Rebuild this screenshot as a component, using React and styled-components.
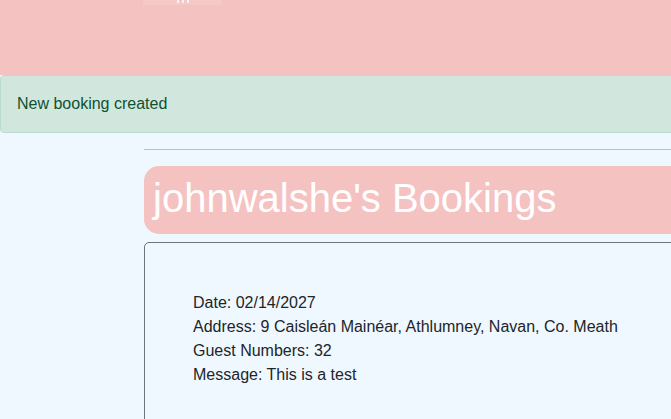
import React from "react";
import styled, { createGlobalStyle } from "styled-components";

const Global = createGlobalStyle`
  html, body { margin: 0; padding: 0; background: #f0f8ff; overflow: hidden; }
  body { font-family: "Liberation Sans", Arial, sans-serif; font-size: 16px; line-height: 1.5; color: #212529; }
  * { box-sizing: border-box; }
`;

const Header = styled.header`
  height: 75px;
  background: #f5c2c2;
  display: flex;
  align-items: flex-start;
  padding-left: 143px;
`;

const Brand = styled.div`
  width: 79px;
  height: 5px;
  background: rgba(255, 255, 255, 0.12);
  display: flex;
  justify-content: center;
  gap: 3px;
`;

const Mark = styled.span`
  width: 2px;
  height: 3px;
  background: rgba(255, 255, 255, 0.75);
`;

const Alert = styled.div`
  width: 900px;
  margin: 0 0 16px 0;
  padding: 16px;
  background: #d1e7dd;
  border: 1px solid #badbcc;
  border-radius: 4px;
  color: #0f5132;
  line-height: 24px;
`;

const Container = styled.main`
  margin-left: 144px;
  width: 900px;
`;

const Rule = styled.hr`
  margin: 0 0 16px 0;
  border: 0;
  border-top: 1px solid #b9bec4;
`;

const TitleBox = styled.div`
  background: #f5c2c2;
  border-radius: 15px;
  padding: 8px 9px 12px;
  margin-bottom: 8px;
`;

const Title = styled.h1`
  margin: 0;
  font-size: 40px;
  font-weight: 400;
  line-height: 48px;
  color: #ffffff;
`;

const Card = styled.section`
  border: 1px solid #6c757d;
  border-radius: 5px;
  padding: 48px;
  min-height: 300px;
`;

const Line = styled.p`
  margin: 0;
  line-height: 24px;
  color: #212529;
`;

const booking = [
  "Date: 02/14/2027",
  "Address: 9 Caisleán Mainéar, Athlumney, Navan, Co. Meath",
  "Guest Numbers: 32",
  "Message: This is a test",
];

export default function App() {
  return (
    <>
      <Global />
      <Header>
        <Brand>
          <Mark />
          <Mark />
          <Mark />
        </Brand>
      </Header>
      <Alert>New booking created</Alert>
      <Container>
        <Rule />
        <TitleBox>
          <Title>johnwalshe's Bookings</Title>
        </TitleBox>
        <Card>
          {booking.map((t) => (
            <Line key={t}>{t}</Line>
          ))}
        </Card>
      </Container>
    </>
  );
}
